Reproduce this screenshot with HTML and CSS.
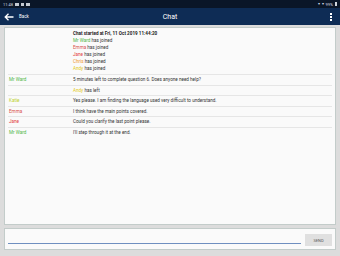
FILE: index.html
```html
<!DOCTYPE html>
<html>
<head>
<meta charset="utf-8">
<link rel="stylesheet" href="styles.css">
</head>
<body>
<div class="device">
  <div class="status">
    <div class="status-left">
      <span class="time">11:48</span>
      <span class="sicon"></span>
      <span class="sicon narrow"></span>
      <span class="sicon"></span>
    </div>
    <div class="status-right">
      <span class="ticon">&#9662;</span>
      <span class="ticon">&#9662;</span>
      <span class="batt-txt">99%</span>
      <span class="batt"></span>
    </div>
  </div>
  <div class="appbar">
    <div class="back">
      <svg width="10" height="8" viewBox="0 0 10 8"><path d="M9.5 4H1.2M4.5 0.7L1.2 4l3.3 3.3" stroke="#fff" stroke-width="1.3" fill="none"/></svg>
      <span>Back</span>
    </div>
    <div class="title">Chat</div>
    <div class="menu"><i></i><i></i><i></i></div>
  </div>
  <div class="main">
    <div class="chat">
      <div class="row">
        <div class="name"></div>
        <div class="msg">
          <div class="bold">Chat started at Fri, 11 Oct 2019 11:44:20</div>
          <div><span class="c-ward">Mr Ward</span> has joined</div>
          <div><span class="c-emma">Emma</span> has joined</div>
          <div><span class="c-jane">Jane</span> has joined</div>
          <div><span class="c-chris">Chris</span> has joined</div>
          <div><span class="c-andy">Andy</span> has joined</div>
        </div>
      </div>
      <div class="row">
        <div class="name c-ward">Mr Ward</div>
        <div class="msg">5 minutes left to complete question 6. Does anyone need help?</div>
      </div>
      <div class="row">
        <div class="name"></div>
        <div class="msg"><span class="c-andy">Andy</span> has left</div>
      </div>
      <div class="row">
        <div class="name c-katie">Katie</div>
        <div class="msg">Yes please. I am finding the language used very difficult to understand.</div>
      </div>
      <div class="row">
        <div class="name c-emma">Emma</div>
        <div class="msg">I think have the main points covered.</div>
      </div>
      <div class="row">
        <div class="name c-jane">Jane</div>
        <div class="msg">Could you clarify the last point please.</div>
      </div>
      <div class="row last">
        <div class="name c-ward">Mr Ward</div>
        <div class="msg">I'll step through it at the end.</div>
      </div>
    </div>
    <div class="input">
      <div class="field"></div>
      <button class="send">SEND</button>
    </div>
  </div>
</div>
</body>
</html>
```
FILE: styles.css
```css
* { box-sizing: border-box; }
html, body { margin: 0; padding: 0; }
body {
  width: 340px;
  height: 256px;
  overflow: hidden;
  font-family: Roboto, "Liberation Sans", sans-serif;
  background: #d9d9d9;
}
.device {
  width: 340px;
  height: 256px;
  display: flex;
  flex-direction: column;
}
.status {
  height: 8px;
  background: #0a1628;
  display: flex;
  justify-content: space-between;
  align-items: center;
  padding: 0 3px 0 3px;
  color: #cfd6e0;
  font-size: 4px;
}
.status-left, .status-right { display: flex; align-items: center; gap: 2px; }
.sicon { width: 4px; height: 3px; background: #c4cad3; }
.sicon.narrow { width: 3px; }
.ticon { font-size: 4px; line-height: 4px; }
.batt { width: 2px; height: 4px; background: #d0d6de; }
.appbar {
  height: 17px;
  background: #0e2c55;
  display: flex;
  align-items: center;
  padding: 0 8px 0 4px;
  color: #fff;
  position: relative;
}
.back { display: flex; align-items: center; gap: 5px; font-size: 4.5px; }
.title {
  position: absolute;
  left: 0; right: 0;
  text-align: center;
  font-size: 7px;
  pointer-events: none;
}
.menu { margin-left: auto; display: flex; flex-direction: column; gap: 1px; }
.menu i { display: block; width: 2px; height: 2px; background: #fff; }
.main {
  flex: 1;
  display: flex;
  flex-direction: column;
  gap: 3px;
  padding: 2px 4px 6px 4px;
  background: #dcdcdc;
}
.chat {
  flex: 1;
  background: #fafafa;
  border: 1px solid #c3ccca;
  padding: 2px 3px 0 3px;
}
.row {
  display: flex;
  border-bottom: 1px solid #e6e6e6;
  font-size: 4.6px;
  line-height: 9.5px;
  color: #333;
}
.row:first-child { line-height: 7px; padding-bottom: 2px; }
.row.last { border-bottom: none; }
.name { width: 65px; flex: none; padding-left: 1px; }
.msg { flex: 1; }
.bold { font-weight: bold; color: #222; }
.c-ward { color: #4cb848; }
.c-emma { color: #d9534f; }
.c-jane { color: #e23b3b; }
.c-chris { color: #f0952a; }
.c-andy { color: #e3c91a; }
.c-katie { color: #bcd12e; }
.input {
  height: 22px;
  flex: none;
  background: #fafafa;
  border: 1px solid #c3ccca;
  display: flex;
  align-items: center;
  padding: 0 3px 0 3px;
  gap: 4px;
}
.field {
  flex: 1;
  height: 1px;
  background: #6f8fc0;
  margin-top: 8px;
}
.send {
  width: 27px;
  height: 12px;
  border: none;
  background: #e0e0e0;
  font-family: Roboto, sans-serif;
  font-size: 4px;
  color: #555;
  padding: 0;
  margin-top: 2px;
}
```
